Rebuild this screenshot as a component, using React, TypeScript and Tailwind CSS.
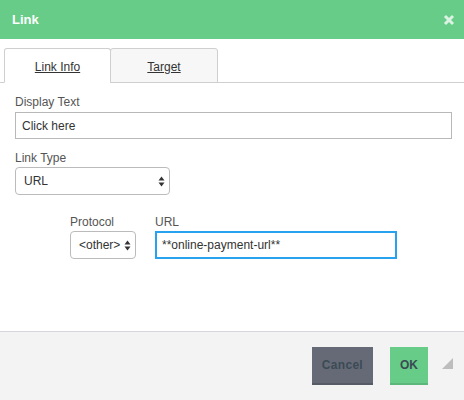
import React from 'react';

const Arrows: React.FC = () => (
  <svg width="7" height="11" viewBox="0 0 7 11" className="shrink-0">
    <path d="M3.5 0.5 L6.5 4.5 L0.5 4.5 Z" fill="#333" />
    <path d="M3.5 10.5 L6.5 6.5 L0.5 6.5 Z" fill="#333" />
  </svg>
);

const App: React.FC = () => {
  return (
    <div className="relative flex h-[400px] w-[464px] flex-col bg-white font-['Liberation_Sans',Arial,sans-serif] text-[12px]">
      {/* Header */}
      <div className="flex h-[39px] items-center justify-between bg-[#66cc88] pl-[12px] pr-[9px]">
        <span className="text-[13px] font-bold text-white">Link</span>
        <svg width="12" height="12" viewBox="0 0 12 12">
          <path d="M2 2 L10 10 M10 2 L2 10" stroke="#dcf2e3" strokeWidth="3" strokeLinecap="butt" />
        </svg>
      </div>

      {/* Body */}
      <div className="flex-1">
        {/* Tabs */}
        <div className="mt-[9px] flex border-b border-[#cfcfcf] pl-[4px]">
          <div className="-mb-px flex h-[35px] w-[107px] items-center justify-center rounded-t-[3px] border border-[#cfcfcf] border-b-white bg-white pt-[2px]">
            <span className="text-[#333] underline">Link Info</span>
          </div>
          <div className="-mb-px -ml-px flex h-[35px] w-[108px] items-center justify-center rounded-t-[3px] border border-[#cfcfcf] bg-[#f7f7f7] pt-[2px]">
            <span className="text-[#333] underline">Target</span>
          </div>
        </div>

        {/* Form */}
        <div className="pl-[15px] pt-[11px]">
          <div className="mb-[2px] leading-[16px] text-[#555]">Display Text</div>
          <div className="flex h-[27px] w-[437px] items-center border border-[#b8b8b8] px-[6px] text-[#333]">
            Click here
          </div>

          <div className="mb-[1px] mt-[11px] leading-[16px] text-[#555]">Link Type</div>
          <div className="flex h-[28px] w-[155px] items-center justify-between rounded-[4px] border border-[#bbb] bg-white pl-[8px] pr-[4px] text-[#333]">
            <span>URL</span>
            <Arrows />
          </div>

          <div className="ml-[55px] mt-[19px] flex gap-[19px]">
            <div className="flex flex-col">
              <div className="mb-[1px] leading-[16px] text-[#555]">Protocol</div>
              <div className="flex h-[28px] w-[66px] items-center justify-between rounded-[4px] border border-[#bbb] bg-white pl-[8px] pr-[4px] text-[#333]">
                <span>&lt;other&gt;</span>
                <Arrows />
              </div>
            </div>
            <div className="flex flex-col">
              <div className="mb-[1px] leading-[16px] text-[#555]">URL</div>
              <div className="flex h-[28px] w-[242px] items-center border-2 border-[#27a2ee] px-[5px] text-[#333]">
                **online-payment-url**
              </div>
            </div>
          </div>
        </div>
      </div>

      {/* Footer */}
      <div className="flex h-[69px] items-start justify-end gap-[17px] border-t border-[#d6d6de] bg-[#f3f3f3] pr-[36px] pt-[15px]">
        <button className="h-[38px] border-b-2 border-[#575b66] bg-[#666a77] px-[10px] text-[12px] font-bold tracking-[0.3px] text-[#3b4a54]">
          Cancel
        </button>
        <button className="h-[38px] border-b-2 border-[#5bb87a] bg-[#66cc88] px-[10px] text-[12px] font-bold text-[#3b4a54]">
          OK
        </button>
      </div>

      {/* Resize handle */}
      <svg className="absolute bottom-[31px] right-[11px]" width="11" height="11" viewBox="0 0 11 11">
        <path d="M11 0 L11 11 L0 11 Z" fill="#bdbdbd" />
      </svg>
    </div>
  );
};

export default App;
